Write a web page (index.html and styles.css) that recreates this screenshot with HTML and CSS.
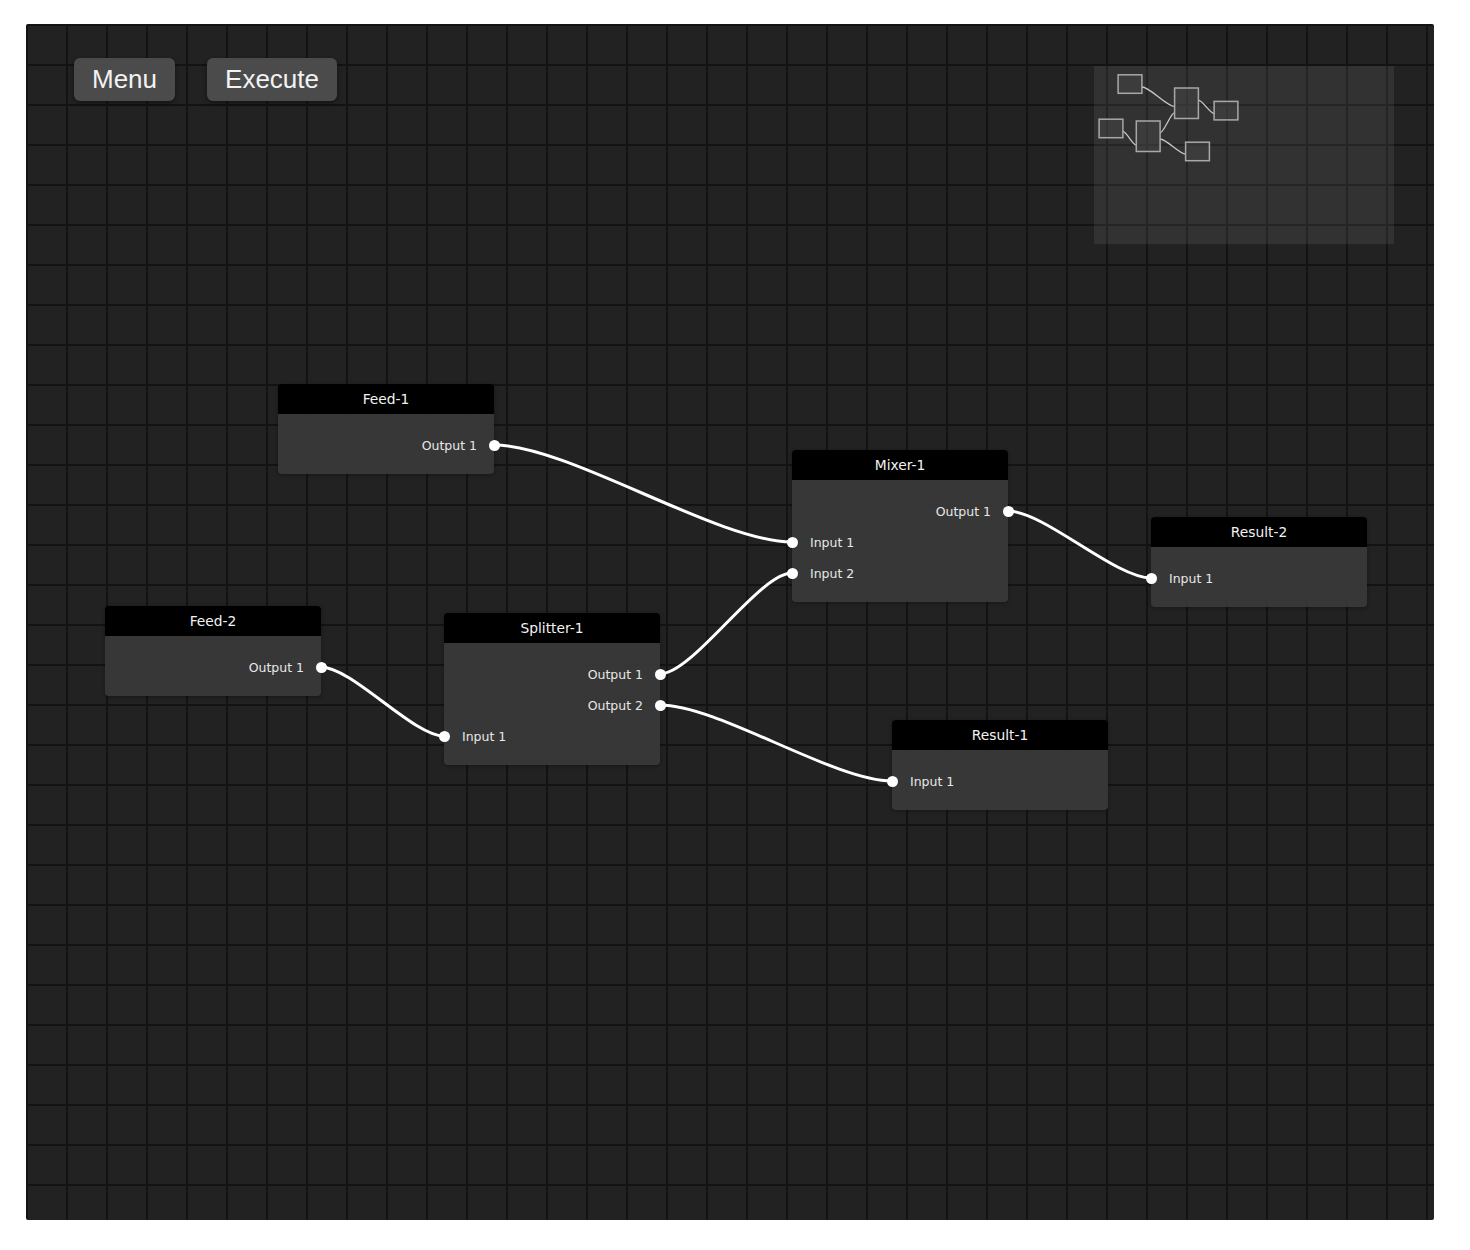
FILE: index.html
```html
<!DOCTYPE html>
<html lang="en">
<head>
<meta charset="utf-8">
<title>Node Editor</title>
<link rel="stylesheet" href="styles.css">
</head>
<body>
<div class="canvas">
  <svg class="wires" viewBox="26 24 1408 1196" width="1408" height="1196">
    <path d="M494 445 C568.5 445 717.5 542 792 542"/>
    <path d="M1008 511 C1043.75 511 1115.25 578 1151 578"/>
    <path d="M321 667 C351.75 667 413.25 736 444 736"/>
    <path d="M660 674 C693 674 759 573 792 573"/>
    <path d="M660 705 C718 705 834 781 892 781"/>
  </svg>

  <div class="node" style="left:252px;top:360px">
    <div class="node-header">Feed-1</div>
    <div class="node-body">
      <div class="row out"><span>Output 1</span><i class="dot"></i></div>
    </div>
  </div>

  <div class="node" style="left:766px;top:426px">
    <div class="node-header">Mixer-1</div>
    <div class="node-body">
      <div class="row out"><span>Output 1</span><i class="dot"></i></div>
      <div class="row in"><i class="dot"></i><span>Input 1</span></div>
      <div class="row in"><i class="dot"></i><span>Input 2</span></div>
    </div>
  </div>

  <div class="node" style="left:1125px;top:493px">
    <div class="node-header">Result-2</div>
    <div class="node-body">
      <div class="row in"><i class="dot"></i><span>Input 1</span></div>
    </div>
  </div>

  <div class="node" style="left:79px;top:582px">
    <div class="node-header">Feed-2</div>
    <div class="node-body">
      <div class="row out"><span>Output 1</span><i class="dot"></i></div>
    </div>
  </div>

  <div class="node" style="left:418px;top:589px">
    <div class="node-header">Splitter-1</div>
    <div class="node-body">
      <div class="row out"><span>Output 1</span><i class="dot"></i></div>
      <div class="row out"><span>Output 2</span><i class="dot"></i></div>
      <div class="row in"><i class="dot"></i><span>Input 1</span></div>
    </div>
  </div>

  <div class="node" style="left:866px;top:696px">
    <div class="node-header">Result-1</div>
    <div class="node-body">
      <div class="row in"><i class="dot"></i><span>Input 1</span></div>
    </div>
  </div>

  <div class="toolbar">
    <button class="btn">Menu</button>
    <button class="btn">Execute</button>
  </div>

  <div class="minimap">
    <svg viewBox="0 0 300 178" width="300" height="178">
      <g class="mini-wires">
        <path d="M47.9 21 C56.1 21 72.4 40.4 80.6 40.4"/>
        <path d="M28.9 65.4 C32.25 65.4 38.95 79.2 42.3 79.2"/>
        <path d="M66.1 66.8 C69.7 66.8 77 46.6 80.6 46.6"/>
        <path d="M66.1 73 C72.5 73 85.2 88.2 91.6 88.2"/>
        <path d="M104.4 34.2 C108.3 34.2 116.2 47.6 120.1 47.6"/>
      </g>
      <g class="mini-nodes">
        <rect x="24.1" y="8.8" width="23.8" height="18.5"/>
        <rect x="80.6" y="22" width="23.8" height="30.5"/>
        <rect x="120.1" y="35.4" width="23.8" height="18.5"/>
        <rect x="5.1" y="53.2" width="23.8" height="18.5"/>
        <rect x="42.3" y="55" width="23.8" height="30.5"/>
        <rect x="91.6" y="76.2" width="23.8" height="18.5"/>
      </g>
    </svg>
  </div>
</div>
</body>
</html>
```

FILE: styles.css
```css
html, body {
  margin: 0;
  padding: 0;
  background: #ffffff;
}

.canvas {
  position: relative;
  margin: 24px 0 0 26px;
  width: 1408px;
  height: 1196px;
  overflow: hidden;
  border-radius: 2px;
  background-color: #222222;
  background-image:
    linear-gradient(to right, #131313 2px, transparent 2px),
    linear-gradient(to bottom, #131313 2px, transparent 2px);
  background-size: 40px 40px;
}

.wires {
  position: absolute;
  left: 0;
  top: 0;
}

.wires path {
  fill: none;
  stroke: #ffffff;
  stroke-width: 3;
}

.node {
  position: absolute;
  width: 216px;
  border-radius: 4px;
  box-shadow: 0 1px 4px rgba(0, 0, 0, 0.35);
  font-family: "DejaVu Sans", Verdana, sans-serif;
}

.node-header {
  height: 30px;
  display: flex;
  align-items: center;
  justify-content: center;
  background: #000000;
  color: #f2f2f2;
  font-size: 13.8px;
  border-radius: 4px 4px 0 0;
}

.node-body {
  padding: 15.5px 0 13.5px;
  background: rgba(56, 56, 56, 0.94);
  border-radius: 0 0 4px 4px;
}

.row {
  position: relative;
  height: 31px;
  display: flex;
  align-items: center;
  font-size: 12.5px;
  color: #e8e8e8;
}

.row.out {
  justify-content: flex-end;
  padding-right: 17px;
}

.row.in {
  padding-left: 18px;
}

.dot {
  position: absolute;
  top: 50%;
  width: 11px;
  height: 11px;
  margin-top: -5.5px;
  border-radius: 50%;
  background: #ffffff;
}

.row.out .dot {
  right: -5.5px;
}

.row.in .dot {
  left: -5.5px;
}

.toolbar {
  position: absolute;
  left: 48px;
  top: 34px;
  display: flex;
  gap: 32px;
}

.btn {
  height: 43px;
  padding: 0 18px;
  border: 0;
  border-radius: 6px;
  background: #4b4b4b;
  color: #f2f2f2;
  font-family: "Liberation Sans", Arial, sans-serif;
  font-size: 26px;
  line-height: 43px;
  box-shadow: 0 2px 5px rgba(0, 0, 0, 0.45);
}

.minimap {
  position: absolute;
  left: 1068px;
  top: 42px;
  width: 300px;
  height: 178px;
  background: rgba(255, 255, 255, 0.075);
}

.minimap svg {
  display: block;
}

.mini-wires path {
  fill: none;
  stroke: #c8c8c8;
  stroke-width: 1.3;
}

.mini-nodes rect {
  fill: rgba(70, 70, 70, 0.5);
  stroke: #a8a8a8;
  stroke-width: 1.5;
}
```
